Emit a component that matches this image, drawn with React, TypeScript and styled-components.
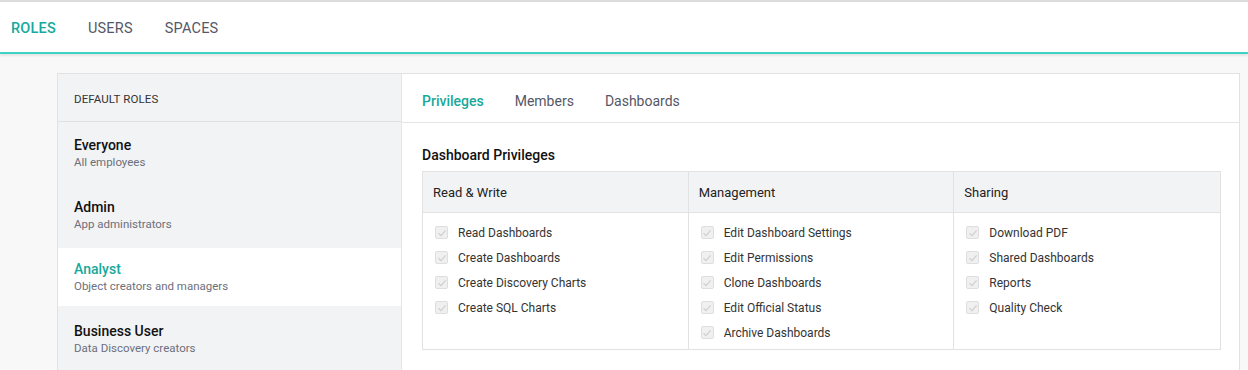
import React from "react";
import styled, { createGlobalStyle } from "styled-components";

const Global = createGlobalStyle`
  html, body { margin: 0; padding: 0; background: #f8f8f8; }
  body { font-family: Roboto, "Noto Sans", sans-serif; color: #222; }
  * { box-sizing: border-box; }
`;

const TEAL = "#17a99b";

const Page = styled.div`
  width: 1248px;
  height: 370px;
  overflow: hidden;
  background: #f8f8f8;
  border-top: 2px solid #dcdcdc;
`;

const TopNav = styled.nav`
  height: 52px;
  background: #fff;
  display: flex;
  align-items: center;
  gap: 32px;
  padding: 2px 11px 0;
  border-bottom: 2px solid #3fd3c6;
  box-shadow: 0 2px 2px rgba(0, 0, 0, 0.08);
`;

const NavItem = styled.div<{ $active?: boolean }>`
  font-size: 14.5px;
  font-weight: ${(p) => (p.$active ? 500 : 400)};
  letter-spacing: 0.2px;
  color: ${(p) => (p.$active ? TEAL : "#555766")};
`;

const Body = styled.div`
  padding: 19px 8px 0 57px;
`;

const Card = styled.div`
  display: flex;
  height: 320px;
  border: 1px solid #e2e2e2;
  border-bottom: none;
  background: #fff;
`;

const Sidebar = styled.aside`
  flex: 0 0 344px;
  background: #f2f3f5;
  border-right: 1px solid #e4e5e8;
  display: flex;
  flex-direction: column;
`;

const SideHeader = styled.div`
  height: 48px;
  border-bottom: 1px solid #dfe0e3;
  display: flex;
  align-items: center;
  padding: 2px 0 0 16px;
  font-size: 11.5px;
  color: #333;
  letter-spacing: 0.1px;
`;

const RoleList = styled.div`
  display: flex;
  flex-direction: column;
  gap: 4px;
  padding-top: 2px;
`;

const Role = styled.div<{ $active?: boolean }>`
  height: 58px;
  padding: 12px 16px 0;
  background: ${(p) => (p.$active ? "#fff" : "transparent")};
`;

const RoleName = styled.div<{ $active?: boolean }>`
  font-size: 14px;
  font-weight: 500;
  color: ${(p) => (p.$active ? TEAL : "#111")};
  line-height: 18px;
`;

const RoleDesc = styled.div`
  font-size: 11.5px;
  color: #6d6f7b;
  line-height: 16px;
`;

const Main = styled.section`
  flex: 1;
  min-width: 0;
  display: flex;
  flex-direction: column;
`;

const Tabs = styled.div`
  height: 49px;
  border-bottom: 1px solid #e4e4e4;
  display: flex;
  align-items: center;
  gap: 31px;
  padding: 5px 20px 0;
`;

const Tab = styled.div<{ $active?: boolean }>`
  font-size: 14px;
  font-weight: ${(p) => (p.$active ? 500 : 400)};
  color: ${(p) => (p.$active ? TEAL : "#555766")};
`;

const Content = styled.div`
  padding: 23px 18px 0 20px;
`;

const SectionTitle = styled.div`
  font-size: 14px;
  font-weight: 500;
  color: #111;
  line-height: 18px;
  margin-bottom: 7px;
`;

const Table = styled.div`
  display: grid;
  grid-template-columns: 1fr 1fr 1fr;
  border: 1px solid #e2e2e2;
`;

const Column = styled.div<{ $last?: boolean }>`
  border-right: ${(p) => (p.$last ? "none" : "1px solid #e2e2e2")};
  display: flex;
  flex-direction: column;
`;

const ColHead = styled.div`
  height: 41px;
  background: #f2f3f5;
  border-bottom: 1px solid #e2e2e2;
  display: flex;
  align-items: center;
  padding-left: 10px;
  font-size: 13px;
  color: #222;
`;

const Items = styled.div`
  padding: 7px 12px 4px;
  display: flex;
  flex-direction: column;
`;

const Item = styled.label`
  height: 25px;
  display: flex;
  align-items: center;
  gap: 10px;
  font-size: 12px;
  color: #333;
`;

const Box = styled.span`
  width: 13px;
  height: 13px;
  border: 1px solid #dedede;
  border-radius: 2px;
  background: #f0f0f0;
  display: flex;
  align-items: center;
  justify-content: center;
`;

const Check = () => (
  <Box>
    <svg width="10" height="10" viewBox="0 0 10 10">
      <path d="M1.5 5.2 L4 7.6 L8.6 2.4" fill="none" stroke="#cfcfcf" strokeWidth="1.2" />
    </svg>
  </Box>
);

const roles = [
  { name: "Everyone", desc: "All employees" },
  { name: "Admin", desc: "App administrators" },
  { name: "Analyst", desc: "Object creators and managers", active: true },
  { name: "Business User", desc: "Data Discovery creators" },
];

const columns = [
  { title: "Read & Write", items: ["Read Dashboards", "Create Dashboards", "Create Discovery Charts", "Create SQL Charts"] },
  { title: "Management", items: ["Edit Dashboard Settings", "Edit Permissions", "Clone Dashboards", "Edit Official Status", "Archive Dashboards"] },
  { title: "Sharing", items: ["Download PDF", "Shared Dashboards", "Reports", "Quality Check"] },
];

export default function App() {
  return (
    <>
      <Global />
      <Page>
        <TopNav>
          <NavItem $active>ROLES</NavItem>
          <NavItem>USERS</NavItem>
          <NavItem>SPACES</NavItem>
        </TopNav>
        <Body>
          <Card>
            <Sidebar>
              <SideHeader>DEFAULT ROLES</SideHeader>
              <RoleList>
                {roles.map((r) => (
                  <Role key={r.name} $active={r.active}>
                    <RoleName $active={r.active}>{r.name}</RoleName>
                    <RoleDesc>{r.desc}</RoleDesc>
                  </Role>
                ))}
              </RoleList>
            </Sidebar>
            <Main>
              <Tabs>
                <Tab $active>Privileges</Tab>
                <Tab>Members</Tab>
                <Tab>Dashboards</Tab>
              </Tabs>
              <Content>
                <SectionTitle>Dashboard Privileges</SectionTitle>
                <Table>
                  {columns.map((c, i) => (
                    <Column key={c.title} $last={i === columns.length - 1}>
                      <ColHead>{c.title}</ColHead>
                      <Items>
                        {c.items.map((it) => (
                          <Item key={it}>
                            <Check />
                            {it}
                          </Item>
                        ))}
                      </Items>
                    </Column>
                  ))}
                </Table>
              </Content>
            </Main>
          </Card>
        </Body>
      </Page>
    </>
  );
}
